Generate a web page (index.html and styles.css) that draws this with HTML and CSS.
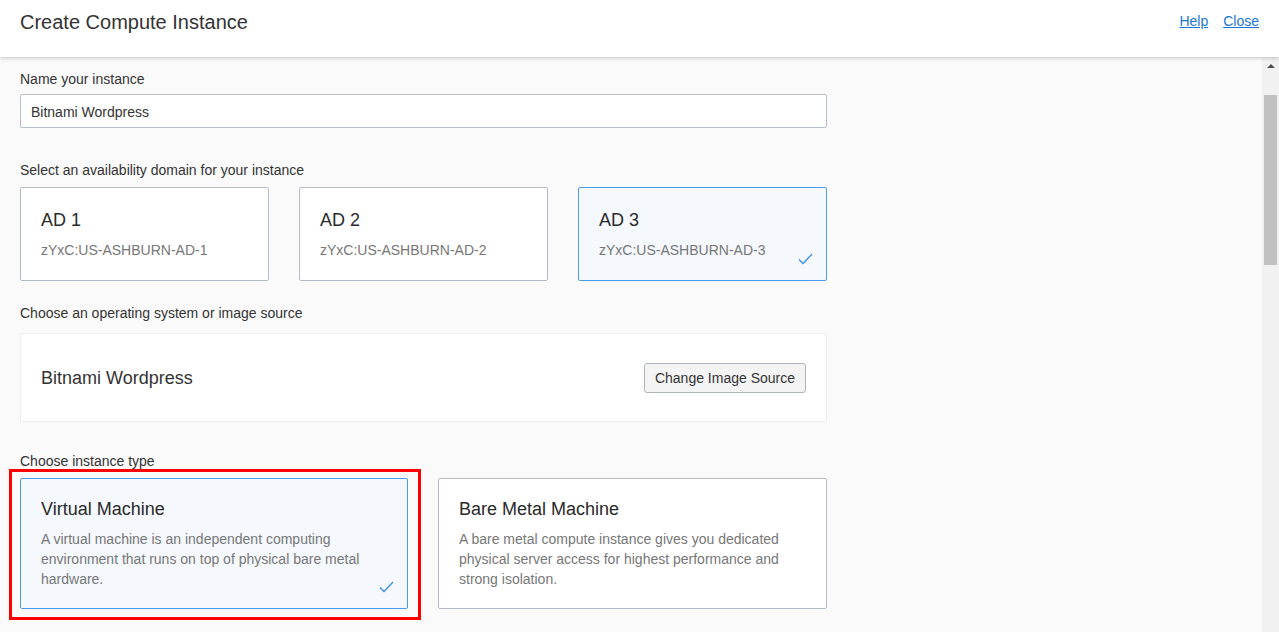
FILE: index.html
```html
<!DOCTYPE html>
<html lang="en">
<head>
<meta charset="utf-8">
<title>Create Compute Instance</title>
<link rel="stylesheet" href="styles.css">
</head>
<body>
<header class="top">
  <h1 class="title">Create Compute Instance</h1>
  <nav class="links"><a href="#">Help</a><a href="#">Close</a></nav>
</header>
<div class="body-row">
  <main class="content">
    <section class="field f-name">
      <label class="lbl">Name your instance</label>
      <div class="input">Bitnami Wordpress</div>
    </section>
    <section class="field f-ad">
      <div class="lbl">Select an availability domain for your instance</div>
      <div class="cards three">
        <div class="card ad"><div class="c-title">AD 1</div><div class="c-sub">zYxC:US-ASHBURN-AD-1</div></div>
        <div class="card ad"><div class="c-title">AD 2</div><div class="c-sub">zYxC:US-ASHBURN-AD-2</div></div>
        <div class="card ad selected"><div class="c-title">AD 3</div><div class="c-sub">zYxC:US-ASHBURN-AD-3</div>
          <svg class="check" width="15" height="12" viewBox="0 0 15 12"><path d="M1 6.5 L5 10.5 L14 1" fill="none" stroke="#3b8de0" stroke-width="1.3"/></svg>
        </div>
      </div>
    </section>
    <section class="field f-os">
      <div class="lbl">Choose an operating system or image source</div>
      <div class="os-box">
        <div class="os-name">Bitnami Wordpress</div>
        <button class="btn">Change Image Source</button>
      </div>
    </section>
    <section class="field f-type">
      <div class="lbl">Choose instance type</div>
      <div class="cards two">
        <div class="highlight-wrap">
          <div class="card it selected"><div class="c-title">Virtual Machine</div>
            <div class="c-desc">A virtual machine is an independent computing environment that runs on top of physical bare metal hardware.</div>
            <svg class="check" width="15" height="12" viewBox="0 0 15 12"><path d="M1 6.5 L5 10.5 L14 1" fill="none" stroke="#3b8de0" stroke-width="1.3"/></svg>
          </div>
          <div class="redbox"></div>
        </div>
        <div class="card it"><div class="c-title">Bare Metal Machine</div>
          <div class="c-desc">A bare metal compute instance gives you dedicated physical server access for highest performance and strong isolation.</div>
        </div>
      </div>
    </section>
  </main>
  <div class="scrollbar">
    <div class="arrow"></div>
    <div class="thumb"></div>
  </div>
</div>
</body>
</html>
```
FILE: styles.css
```css
* { box-sizing: border-box; }
html, body { margin: 0; padding: 0; }
body {
  width: 1279px;
  height: 632px;
  overflow: hidden;
  background: #fafafa;
  font-family: "Liberation Sans", Arial, sans-serif;
  color: #333;
  display: flex;
  flex-direction: column;
}
.top {
  height: 57px;
  flex: none;
  background: #fff;
  display: flex;
  align-items: flex-start;
  justify-content: space-between;
  padding: 0 20px;
  box-shadow: 0 1px 4px rgba(0,0,0,0.22);
  position: relative;
  z-index: 2;
}
.title {
  margin: 10px 0 0;
  font-size: 20px;
  font-weight: normal;
  line-height: 24px;
  color: #333;
}
.links { display: flex; gap: 15px; margin-top: 12px; }
.links a {
  font-size: 14px;
  line-height: 18px;
  color: #1a76d2;
  text-decoration: underline;
}
.body-row { flex: 1; display: flex; min-height: 0; }
.content { flex: 1; padding: 13px 0 0 20px; }
.scrollbar {
  width: 17px;
  flex: none;
  background: #f1f1f1;
  position: relative;
  display: flex;
  flex-direction: column;
  align-items: center;
}
.arrow {
  margin-top: 7px;
  width: 0; height: 0;
  border-left: 4px solid transparent;
  border-right: 4px solid transparent;
  border-bottom: 4px solid #505050;
}
.thumb {
  margin-top: 27px;
  width: 13px;
  height: 170px;
  background: #c1c1c1;
}
.field { width: 807px; }
.lbl { font-size: 14px; line-height: 18px; color: #333; display: block; }
.input {
  margin-top: 6px;
  height: 34px;
  border: 1px solid #b5bfca;
  border-radius: 2px;
  background: #fff;
  padding: 1px 10px 0;
  font-size: 14px;
  line-height: 32px;
  color: #333;
}
.f-ad { margin-top: 33px; }
.cards { display: grid; gap: 30px; margin-top: 8px; }
.cards.three { grid-template-columns: 1fr 1fr 1fr; }
.cards.two { grid-template-columns: 388px 1fr; }
.card {
  position: relative;
  min-width: 0;
  background: #fff;
  border: 1px solid #b3bcc6;
  border-radius: 2px;
}
.card.selected { background: #f5f8fd; border-color: #4b9be8; }
.ad { height: 94px; padding: 21px 20px 0; }
.c-title { font-size: 18px; line-height: 22px; color: #2a2a2a; }
.c-sub { margin-top: 11px; font-size: 14px; line-height: 16px; color: #777; }
.check { position: absolute; right: 13px; bottom: 15px; }
.f-os { margin-top: 23px; }
.os-box {
  margin-top: 11px;
  height: 89px;
  background: #fff;
  border: 1px solid #eeeeee;
  border-radius: 2px;
  display: flex;
  align-items: center;
  justify-content: space-between;
  padding: 0 20px;
}
.os-name { font-size: 18px; line-height: 22px; color: #333; }
.btn {
  height: 30px;
  padding: 0 10px;
  background: #f4f4f5;
  border: 1px solid #adb4bc;
  border-radius: 3px;
  font-family: "Liberation Sans", Arial, sans-serif;
  font-size: 14px;
  color: #333;
}
.f-type { margin-top: 30px; }
.highlight-wrap { min-width: 0; position: relative; display: flex; }
.highlight-wrap .card { flex: 1; }
.it { height: 131px; padding: 19px 20px 0; }
.it .c-desc { margin-top: 9px; font-size: 14px; line-height: 20px; color: #777; }
.redbox {
  position: absolute;
  left: -11px; top: -9px; right: -13px; bottom: -11px;
  border: 3px solid #ff0000;
  pointer-events: none;
}
```
